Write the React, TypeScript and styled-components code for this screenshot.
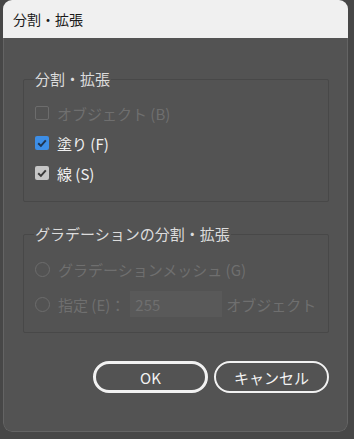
import React from 'react';
import styled, { createGlobalStyle } from 'styled-components';

const GlobalStyle = createGlobalStyle`
  body {
    margin: 0;
    background: #474747;
    font-family: "Noto Sans CJK JP", "Noto Sans", sans-serif;
  }
`;

const Dialog = styled.div`
  width: 345px;
  height: 432px;
  margin-left: 3px;
  display: flex;
  flex-direction: column;
  border-radius: 9px;
  overflow: hidden;
`;

const TitleBar = styled.div`
  height: 38px;
  flex-shrink: 0;
  display: flex;
  align-items: center;
  padding-left: 10px;
  background: #f0f0f0;
  color: #1a1a1a;
  font-size: 14px;
`;

const Body = styled.div`
  flex: 1;
  box-sizing: border-box;
  padding: 32px 18px 0 19px;
  background: #535353;
  border: 1px solid #646464;
  border-top: none;
  border-radius: 0 0 9px 9px;
`;

const Group = styled.fieldset<{ $gap?: number }>`
  margin: ${(p) => p.$gap ?? 0}px 0 0;
  padding: 0 10px 13px;
  min-width: 0;
  border: 1px solid #484848;
  border-radius: 2px;
`;

const Legend = styled.legend`
  padding: 0 1px;
  font-size: 15px;
  line-height: 18px;
  color: #dcdcdc;
`;

const List = styled.div<{ $top: number }>`
  display: flex;
  flex-direction: column;
  padding-top: ${(p) => p.$top}px;
`;

const Row = styled.div<{ $dim?: boolean; $space?: number }>`
  height: 30px;
  margin-top: ${(p) => p.$space ?? 0}px;
  display: flex;
  align-items: center;
  gap: 8px;
  padding-left: 1px;
  font-size: 15px;
  color: ${(p) => (p.$dim ? '#6f6f6f' : '#f0f0f0')};
  white-space: nowrap;
`;

const Box = styled.span<{ $fill?: string }>`
  box-sizing: border-box;
  width: 14px;
  height: 14px;
  border-radius: 2px;
  display: flex;
  align-items: center;
  justify-content: center;
  background: ${(p) => p.$fill ?? 'transparent'};
  border: ${(p) => (p.$fill ? 'none' : '1.5px solid #6c6c6c')};
`;

const Radio = styled.span`
  box-sizing: border-box;
  width: 15px;
  height: 15px;
  border-radius: 50%;
  border: 1.5px solid #6c6c6c;
`;

const NumField = styled.div`
  box-sizing: border-box;
  width: 92px;
  height: 26px;
  margin-left: -3px;
  margin-right: -4px;
  padding-left: 5px;
  display: flex;
  align-items: center;
  background: #595959;
  color: #6f6f6f;
  font-size: 15px;
`;

const Buttons = styled.div`
  margin-top: 28px;
  display: flex;
  justify-content: flex-end;
  gap: 6px;
`;

const Button = styled.button<{ $primary?: boolean }>`
  box-sizing: border-box;
  width: 115px;
  height: 32px;
  border-radius: 16px;
  background: transparent;
  border: ${(p) => (p.$primary ? 3 : 2)}px solid #f2f2f2;
  color: #f2f2f2;
  font-family: inherit;
  font-size: 15px;
  padding: 0;
`;

const Check = ({ color }: { color: string }) => (
  <svg width="14" height="14" viewBox="0 0 14 14">
    <path d="M3.2 7.2 L5.9 9.9 L10.8 4.4" fill="none" stroke={color} strokeWidth="2" />
  </svg>
);

export default function App() {
  return (
    <>
      <GlobalStyle />
      <Dialog>
        <TitleBar>分割・拡張</TitleBar>
        <Body>
          <Group>
            <Legend>分割・拡張</Legend>
            <List $top={10}>
              <Row $dim>
                <Box />
                オブジェクト (B)
              </Row>
              <Row>
                <Box $fill="#3d8ee6">
                  <Check color="#1f3550" />
                </Box>
                塗り (F)
              </Row>
              <Row>
                <Box $fill="#c6c6c6">
                  <Check color="#3a3a3a" />
                </Box>
                線 (S)
              </Row>
            </List>
          </Group>
          <Group $gap={23}>
            <Legend>グラデーションの分割・拡張</Legend>
            <List $top={11}>
              <Row $dim>
                <Radio />
                グラデーションメッシュ (G)
              </Row>
              <Row $dim $space={5}>
                <Radio />
                指定 (E)：
                <NumField>255</NumField>
                オブジェクト
              </Row>
            </List>
          </Group>
          <Buttons>
            <Button $primary>OK</Button>
            <Button>キャンセル</Button>
          </Buttons>
        </Body>
      </Dialog>
    </>
  );
}
